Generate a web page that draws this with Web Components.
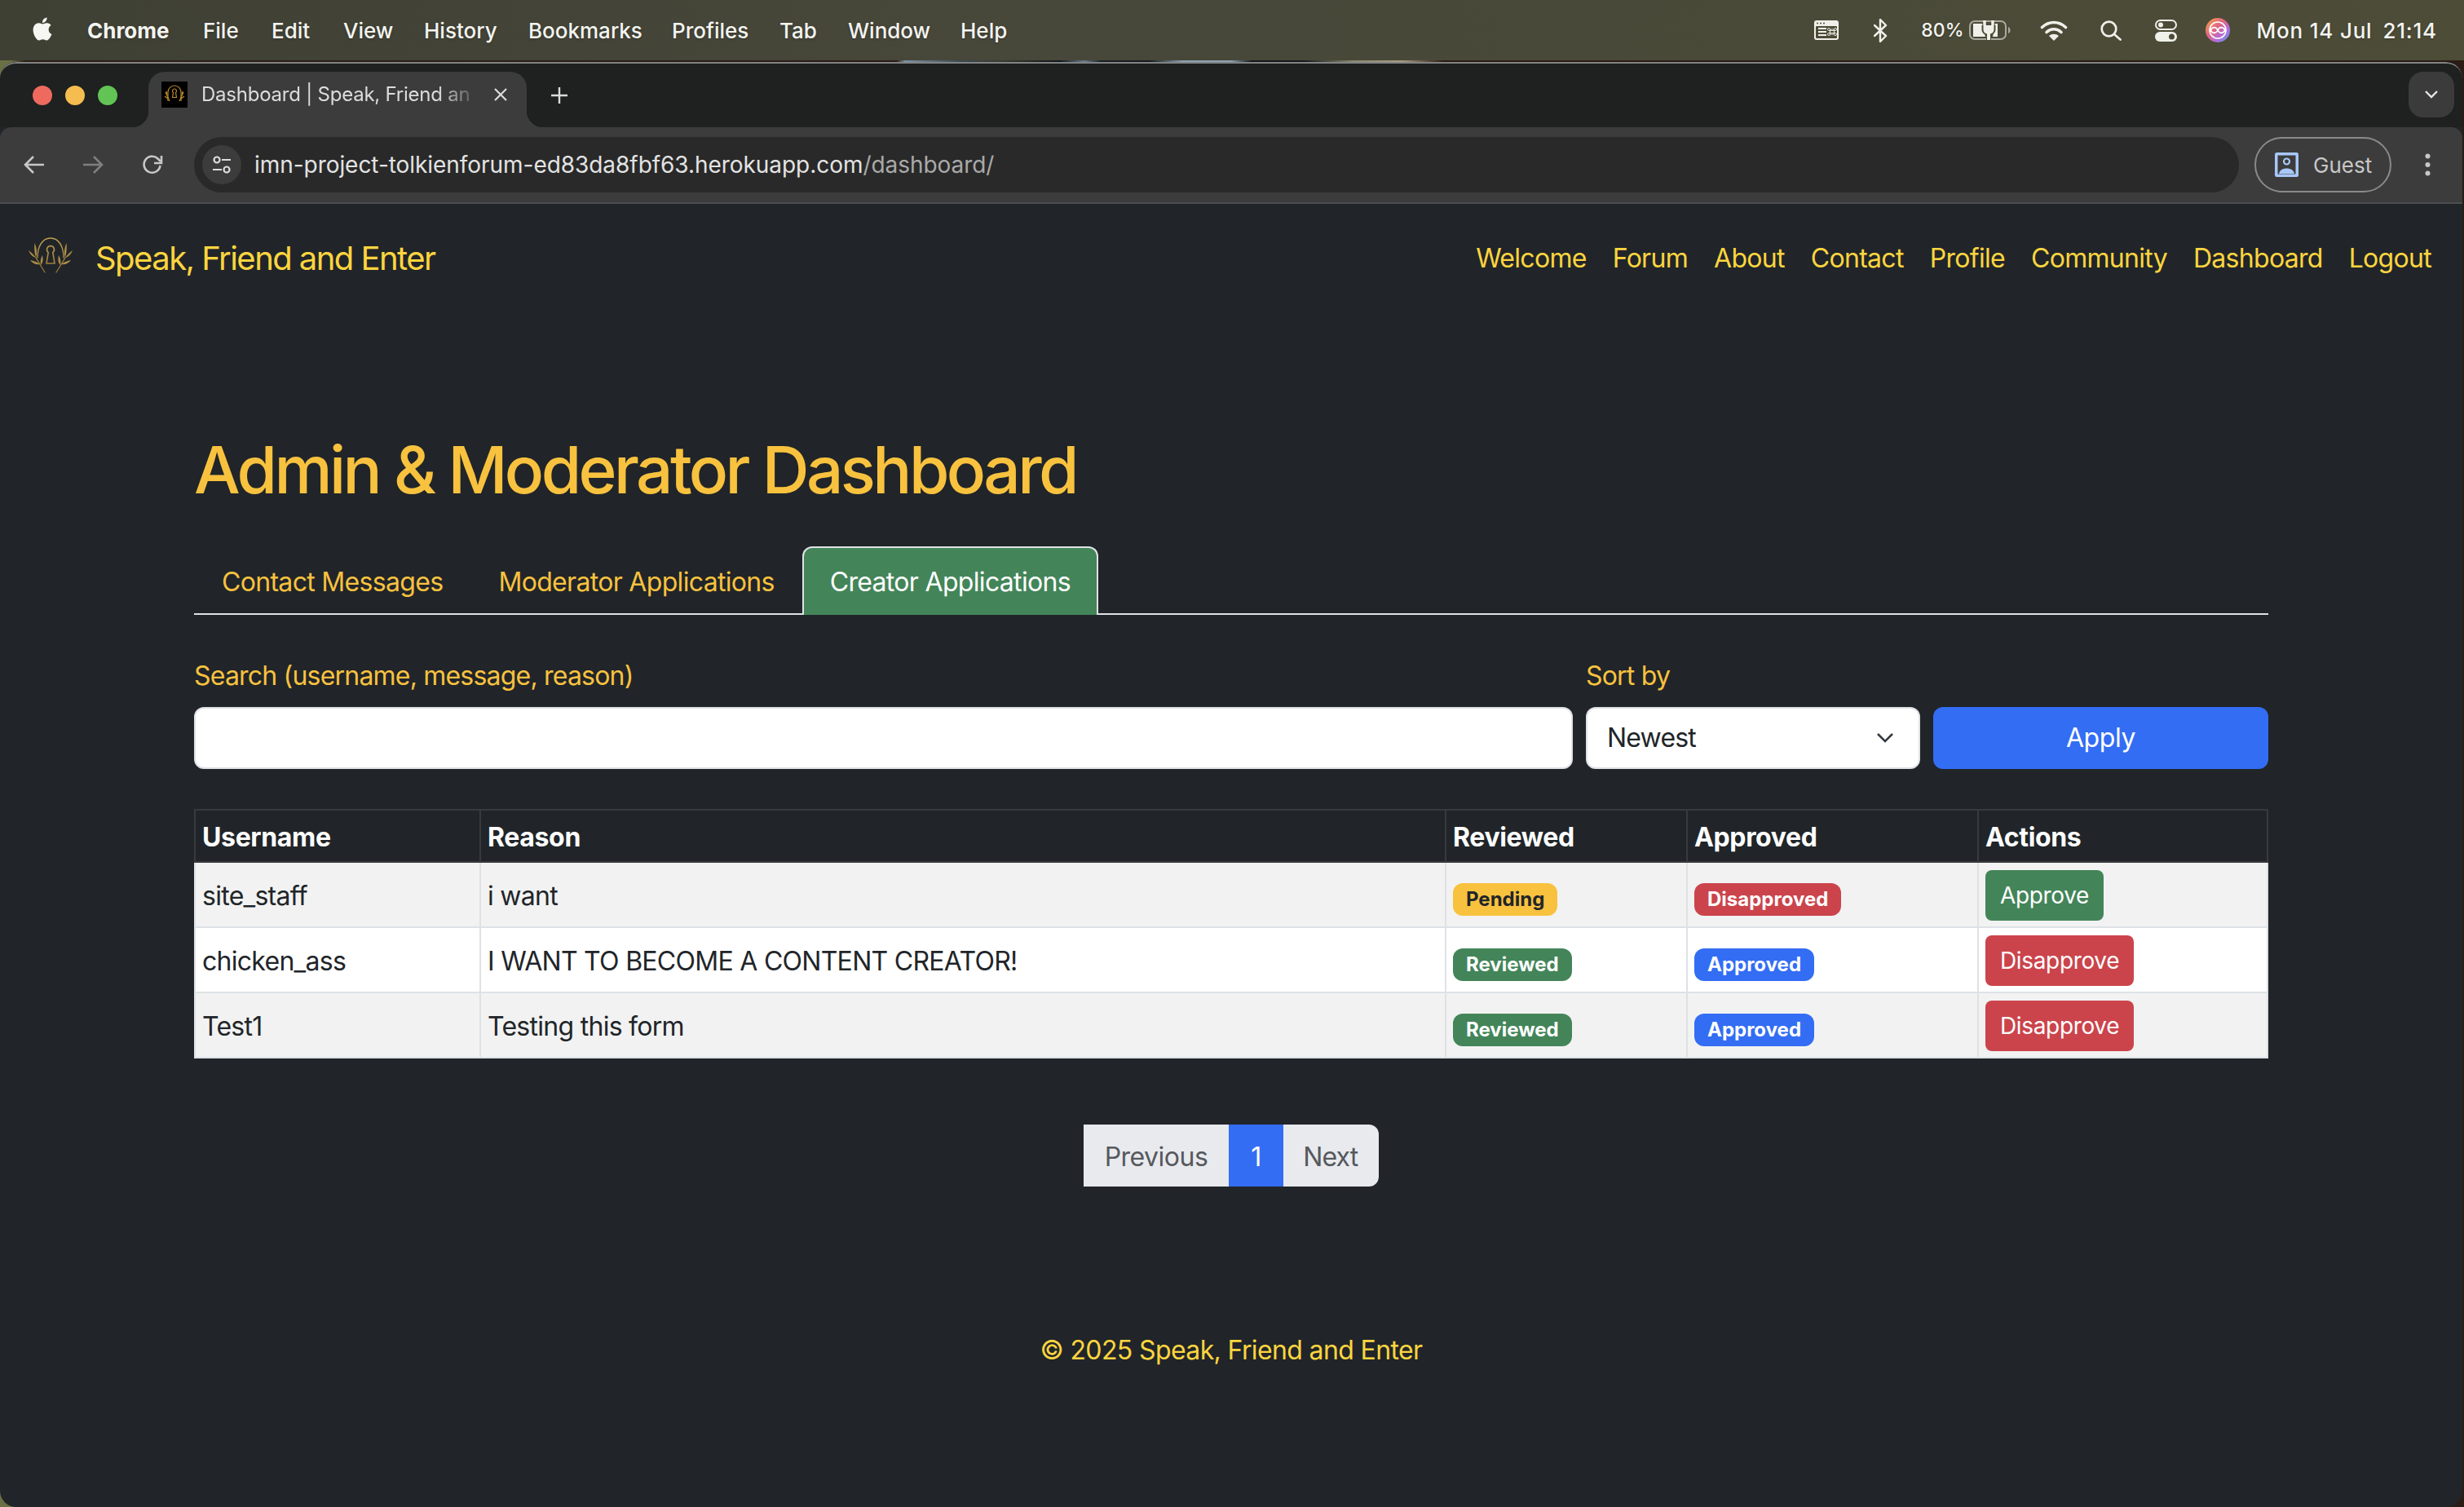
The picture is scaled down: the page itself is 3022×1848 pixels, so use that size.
<!DOCTYPE html>
<html lang="en">
<head>
<meta charset="utf-8">
<title>Dashboard | Speak, Friend and Enter</title>
<style>
  html, body { margin: 0; padding: 0; background: #16170f; }
  body {
    width: 3022px;
    height: 1848px;
    overflow: hidden;
    font-family: Inter, "Liberation Sans", sans-serif;
    /* bit of wallpaper showing between the menu bar and the window */
    background: linear-gradient(90deg, #6a6f45 0, #6a6f45 14px, #2a1f18 30px, #2a1c14 1100px, #7c93a5 1110px, #3a4650 1180px, #3a3a2c 1230px, #11161b 1300px, #6a7d90 1330px, #1a1f22 1350px, #141a1c 1410px, #8ba0b0 1450px, #8ba0b0 1510px, #14181a 1535px, #141a1c 1600px, #8b8a70 1660px, #a89c80 1720px, #2a1c14 1770px, #2a1c14 3022px);
  }
</style>
</head>
<body>
<mac-menubar></mac-menubar>
<browser-window>
  <tab-strip slot="chrome"></tab-strip>
  <browser-toolbar slot="chrome"></browser-toolbar>
  <site-nav></site-nav>
  <dash-page></dash-page>
  <site-footer></site-footer>
</browser-window>

<script>
const GOLD = '#f8c23f';
const GOLD_BRIGHT = '#fdd53f';

class MacMenubar extends HTMLElement {
  connectedCallback() {
    this.attachShadow({ mode: 'open' });
    const items = [['File', 249], ['Edit', 333], ['View', 421], ['History', 520], ['Bookmarks', 648], ['Profiles', 824], ['Tab', 956], ['Window', 1040], ['Help', 1178]];
    this.shadowRoot.innerHTML = `
      <style>
        :host {
          display: flex;
          height: 74px;
          align-items: center;
          background: linear-gradient(90deg, #3f4034 0%, #47473a 40%, #4c4c37 100%);
          color: #f4f4f0;
          font: 500 26px Inter, "Liberation Sans", sans-serif;
          padding: 0 33px 0 38px;
          text-shadow: 0 1px 3px rgba(0,0,0,.25);
        }
        .left { display: flex; align-items: center; }
        .apple { width: 28px; height: 33px; fill: #f6f6f2; margin-right: 41px; margin-top: -4px; }
        b { font-weight: 700; width: 142px; flex: none; }
        .left span { flex: none; }
        .right { margin-left: auto; display: flex; align-items: center; }
        .right svg { flex: none; display: block; }
        .pct { font-size: 23px; margin-left: 41px; margin-right: 6px; }
        .date { margin-left: 33px; letter-spacing: .8px; }
        .date i { font-style: normal; margin-left: 13px; }
      </style>
      <div class="left">
        <svg class="apple" viewBox="0 0 24 24"><path d="M12.152 6.896c-.948 0-2.415-1.078-3.96-1.04-2.04.027-3.91 1.183-4.961 3.014-2.117 3.675-.546 9.103 1.519 12.09 1.013 1.454 2.208 3.09 3.792 3.039 1.52-.065 2.09-.987 3.935-.987 1.831 0 2.35.987 3.96.948 1.637-.026 2.676-1.48 3.676-2.948 1.156-1.688 1.636-3.325 1.662-3.415-.039-.013-3.182-1.221-3.22-4.857-.026-3.04 2.48-4.494 2.597-4.559-1.429-2.09-3.623-2.324-4.39-2.376-2-.156-3.675 1.09-4.61 1.09zM15.53 3.83c.843-1.012 1.4-2.427 1.245-3.83-1.207.052-2.662.805-3.532 1.818-.78.896-1.454 2.338-1.273 3.714 1.338.104 2.715-.688 3.559-1.701"/></svg>
        <b>Chrome</b>
        ${items.map((it, i) => `<span style="width:${(i < items.length - 1 ? items[i + 1][1] : it[1] + 60) - it[1]}px">${it[0]}</span>`).join('')}
      </div>
      <div class="right">
        <svg width="30" height="24" viewBox="0 0 30 24"><rect width="30" height="24" rx="3" fill="#f0f0ea"/><rect x="2" y="7" width="26" height="15" rx="1" fill="#4c4c37"/><g fill="#4c4c37"><circle cx="4" cy="3.500" r="1"/><circle cx="8" cy="3.500" r="1"/><circle cx="12" cy="3.500" r="1"/></g><path d="M5 10h10M5 14h10M5 18h10" stroke="#f0f0ea" stroke-width="1.800"/><path d="M19.500 11h5v6h-5zM19.500 11a1.500 1.500 0 1 0-1.500 1.500h8a1.500 1.500 0 1 0-1.500-1.500v6a1.500 1.500 0 1 0 1.500-1.500h-8a1.500 1.500 0 1 0 1.500 1.500z" fill="none" stroke="#f0f0ea" stroke-width=".9"/></svg>
        <svg style="margin-left:43px" width="17" height="29" viewBox="0 0 17 29"><path d="M1 8l14 13-7 7V1l7 7L1 21" fill="none" stroke="#f0f0ea" stroke-width="2.400" stroke-linejoin="round" stroke-linecap="round"/></svg>
        <span class="pct">80%</span>
        <svg width="51" height="24" viewBox="0 0 51 24"><rect x="1" y="1" width="44" height="22" rx="6" fill="none" stroke="#a9a99e" stroke-width="2"/><path d="M48 8c2 1 2.500 2 2.500 4s-.5 3-2.500 4z" fill="#a9a99e"/><path d="M5 4h11l4 16H5z" fill="#f0f0ea"/><path d="M29 20l3-16h3v16z" fill="#f0f0ea"/><path d="M15.500 6h17v5c0 4-3 6.500-5.500 7v6h-6v-6c-2.500-.5-5.500-3-5.500-7z" fill="#4c4c37"/><path d="M19 6V0M29 6V0" stroke="#f0f0ea" stroke-width="3.500"/><path d="M17.500 6h13v5c0 3.500-2.500 5-4.500 5.500V24h-4v-7.500c-2-.5-4.500-2-4.500-5.500z" fill="#f0f0ea"/></svg>
        <svg style="margin-left:36px" width="34" height="25" viewBox="0 0 34 25" fill="none" stroke="#f0f0ea" stroke-linecap="round"><path d="M2.500 8.500C11 .5 23 .5 31.500 8.500" stroke-width="3.600"/><path d="M8 14.500c5.500-5 12.500-5 18 0" stroke-width="3.600"/><path d="M17 25l-6-6c3.500-3 8.500-3 12 0z" fill="#f0f0ea" stroke="none"/></svg>
        <svg style="margin-left:40px" width="26" height="25" viewBox="0 0 26 25" fill="none" stroke="#f0f0ea" stroke-width="2.700" stroke-linecap="round"><circle cx="10.500" cy="10.500" r="8.800"/><path d="M17 17l7.500 6.500"/></svg>
        <svg style="margin-left:41px" width="27" height="27" viewBox="0 0 27 27"><rect x="1" y="1" width="25" height="11" rx="5.500" fill="none" stroke="#f0f0ea" stroke-width="2"/><circle cx="7" cy="6.500" r="3" fill="#f0f0ea"/><rect y="15" width="27" height="12" rx="6" fill="#f0f0ea"/><circle cx="20.500" cy="21" r="3.500" fill="#4c4c37"/></svg>
        <svg style="margin-left:35px" width="30" height="30" viewBox="0 0 30 30"><defs><linearGradient id="si" x1="0" y1="0" x2="1" y2="1"><stop offset="0" stop-color="#f3a83f"/><stop offset=".4" stop-color="#e4677f"/><stop offset=".7" stop-color="#b06ddc"/><stop offset="1" stop-color="#4fa8ec"/></linearGradient></defs><circle cx="15" cy="15" r="15" fill="url(#si)"/><circle cx="15" cy="15" r="10" fill="none" stroke="#fff" stroke-width="1.600"/><path d="M6 15c3-5 7-4 9 0s6 5 9 0c-3-5-7-4-9 0s-6 5-9 0z" fill="none" stroke="#fff" stroke-width="1.600"/></svg>
        <span class="date">Mon 14 Jul<i>21:14</i></span>
      </div>
    `;
  }
}
customElements.define('mac-menubar', MacMenubar);

class BrowserWindow extends HTMLElement {
  connectedCallback() {
    this.attachShadow({ mode: 'open' });
    this.shadowRoot.innerHTML = `
      <style>
        :host {
          display: block;
          height: 1772px;
          margin-top: 2px;
          margin-right: 2px;
          border-radius: 20px 20px 20px 20px;
          background: #212529;
          overflow: hidden;
        }
        .chrome { display: block; }
      </style>
      <div class="chrome"><slot name="chrome"></slot></div>
      <slot></slot>
    `;
  }
}
customElements.define('browser-window', BrowserWindow);

class TabStrip extends HTMLElement {
  connectedCallback() {
    this.attachShadow({ mode: 'open' });
    this.shadowRoot.innerHTML = `
      <style>
        :host {
          display: flex;
          height: 80px;
          box-sizing: border-box;
          padding-top: 10px;
          background: #1f2020;
          border-top: 2px solid #828384;
          border-radius: 20px 20px 0 0;
          font: 400 24px Inter, "Liberation Sans", sans-serif;
          letter-spacing: -.23px;
          color: #dcdcdc;
        }
        .lights { display: flex; gap: 16px; padding: 17px 0 0 40px; width: 182px; box-sizing: border-box; flex: none; }
        .lights i { width: 24px; height: 24px; border-radius: 50%; }
        .tab {
          position: relative;
          width: 464px;
          height: 68px;
          box-sizing: border-box;
          background: #3c3c3c;
          border-radius: 20px 20px 0 0;
          display: flex;
          align-items: flex-start;
          padding: 12px 23px 0 16px;
          flex: none;
        }
        .tab::before, .tab::after {
          content: '';
          position: absolute;
          bottom: 0;
          width: 20px;
          height: 20px;
        }
        .tab::before { left: -20px; background: radial-gradient(circle at 0 0, transparent 20px, #3c3c3c 20.5px); }
        .tab::after { right: -20px; background: radial-gradient(circle at 100% 0, transparent 20px, #3c3c3c 20.5px); }
        .fav { width: 32px; height: 32px; background: #000; flex: none; margin-right: 17px; }
        .title {
          white-space: nowrap;
          line-height: 32px;
          -webkit-mask-image: linear-gradient(90deg, #000 88%, rgba(0,0,0,.25) 100%);
          mask-image: linear-gradient(90deg, #000 88%, rgba(0,0,0,.25) 100%);
        }
        .x { margin-left: auto; margin-top: 7px; display: block; }
        .plus { margin: 19px 0 0 30px; display: block; }
        .more {
          margin-left: auto;
          margin-right: 10px;
          width: 56px;
          height: 56px;
          border-radius: 18px;
          background: #3b3b3b;
          display: flex;
          align-items: center;
          justify-content: center;
        }
      </style>
      <div class="lights"><i style="background:#ee6a5f"></i><i style="background:#f5bd4f"></i><i style="background:#61c454"></i></div>
      <div class="tab">
        <svg class="fav" viewBox="0 0 32 32" fill="none" stroke="#b98a2c" stroke-width="1.200"><path d="M8 24V13a8 8 0 0 1 16 0v11"/><path d="M16 9a2.500 2.500 0 0 1 1.500 4.500l1 6h-5l1-6A2.500 2.500 0 0 1 16 9z"/><path d="M5 13l5 11M27 13l-5 11M4 18l4 3M28 18l-4 3M6 12l1 5M26 12l-1 5"/></svg>
        <span class="title">Dashboard | Speak, Friend an</span>
        <svg class="x" width="18" height="18" viewBox="0 0 18 18"><path d="M2 2l14 14M16 2L2 16" stroke="#dcdcdc" stroke-width="2.200"/></svg>
      </div>
      <svg class="plus" width="20" height="20" viewBox="0 0 20 20"><path d="M10 0v20M0 10h20" stroke="#dcdcdc" stroke-width="2.400"/></svg>
      <div class="more"><svg width="16" height="10" viewBox="0 0 16 10"><path d="M1 1l7 7 7-7" fill="none" stroke="#e6e6e6" stroke-width="2.400"/></svg></div>
    `;
  }
}
customElements.define('tab-strip', TabStrip);

class BrowserToolbar extends HTMLElement {
  connectedCallback() {
    this.attachShadow({ mode: 'open' });
    this.shadowRoot.innerHTML = `
      <style>
        :host {
          display: flex;
          align-items: center;
          height: 94px;
          box-sizing: border-box;
          background: #3c3c3c;
          border-bottom: 2px solid #4a4d4f;
          border-radius: 14px 14px 0 0;
          font: 400 28px Inter, "Liberation Sans", sans-serif;
          color: #e3e3e3;
        }
        svg { display: block; flex: none; }
        .nav { display: flex; align-items: center; padding-left: 29px; width: 238px; box-sizing: border-box; flex: none; }
        .omni {
          flex: none;
          width: 2508px;
          height: 68px;
          border-radius: 34px;
          background: #292929;
          display: flex;
          align-items: center;
          padding-left: 10px;
          box-sizing: border-box;
          letter-spacing: -.05px;
        }
        .tune { width: 48px; height: 48px; border-radius: 50%; background: #3c3c3c; display: flex; align-items: center; justify-content: center; margin-right: 16px; }
        .path { color: #a9a9a9; }
        .guest {
          margin-left: 19px;
          width: 168px;
          height: 68px;
          box-sizing: border-box;
          border: 2px solid #8a8a8a;
          border-radius: 34px;
          display: flex;
          align-items: center;
          padding-left: 23px;
          gap: 18px;
          flex: none;
          color: #c7c7c7;
          font-size: 26px;
        }
        .kebab { margin-left: 41px; }
      </style>
      <div class="nav">
        <svg width="25" height="24" viewBox="0 0 25 24"><path d="M12 2L2 12l10 10M2 12h23" fill="none" stroke="#c7c7c7" stroke-width="2.600"/></svg>
        <svg style="margin-left:48px" width="25" height="24" viewBox="0 0 25 24"><path d="M13 2l10 10-10 10M23 12H0" fill="none" stroke="#7f7f7f" stroke-width="2.600"/></svg>
        <svg style="margin-left:47px" width="26" height="26" viewBox="0 0 26 26"><path d="M22.500 14a10 10 0 1 1-3-8.500l3.500 3.500" fill="none" stroke="#c7c7c7" stroke-width="2.600"/><path d="M24 2v9h-9" fill="none" stroke="#c7c7c7" stroke-width="2.600"/></svg>
      </div>
      <div class="omni">
        <span class="tune"><svg width="24" height="24" viewBox="0 0 24 24" fill="none" stroke="#dcdcdc" stroke-width="2.200"><circle cx="6" cy="6" r="3.500"/><path d="M12 6h11M1 18h11"/><circle cx="18" cy="18" r="3.500"/></svg></span>
        <span>imn-project-tolkienforum-ed83da8fbf63.herokuapp.com<span class="path">/dashboard/</span></span>
      </div>
      <div class="guest">
        <svg width="29" height="30" viewBox="0 0 29 30"><rect width="29" height="30" rx="2.500" fill="#a8c7fa"/><rect x="3.500" y="3.500" width="22" height="23" fill="#3c3c3c"/><circle cx="14.500" cy="11" r="3.500" fill="none" stroke="#a8c7fa" stroke-width="2.200"/><path d="M5 26c1-4.500 5-6.500 9.500-6.500S23 21.500 24 26z" fill="#a8c7fa"/></svg>
        <span>Guest</span>
      </div>
      <svg class="kebab" width="7" height="28" viewBox="0 0 7 28" fill="#c7c7c7"><circle cx="3.500" cy="3.500" r="3"/><circle cx="3.500" cy="14" r="3"/><circle cx="3.500" cy="24.500" r="3"/></svg>
    `;
  }
}
customElements.define('browser-toolbar', BrowserToolbar);

class SiteNav extends HTMLElement {
  connectedCallback() {
    this.attachShadow({ mode: 'open' });
    const links = ['Welcome', 'Forum', 'About', 'Contact', 'Profile', 'Community', 'Dashboard', 'Logout'];
    this.shadowRoot.innerHTML = `
      <style>
        :host {
          display: flex;
          align-items: center;
          justify-content: space-between;
          height: 134px;
          padding: 0 22px 0 34px;
          font: 400 32px/48px Inter, "Liberation Sans", sans-serif;
          letter-spacing: -.7px;
          color: ${GOLD_BRIGHT};
        }
        .brand { display: flex; align-items: center; font-size: 40px; letter-spacing: -1.55px; }
        .brand svg { display: block; margin: -8px 27px 0 0; }
        a { color: inherit; text-decoration: none; padding: 0 16px; }
        ul { display: flex; list-style: none; margin: 0; padding: 0; }
      </style>
      <div class="brand">
        <svg width="56" height="44" viewBox="0 0 56 44" fill="none" stroke="url(#lg)" stroke-linecap="round">
          <defs><linearGradient id="lg" gradientUnits="userSpaceOnUse" x1="0" y1="0" x2="0" y2="44"><stop offset="0" stop-color="#c6a052"/><stop offset="1" stop-color="#8f7233"/></linearGradient></defs>
          <path d="M12 25C12 11 18 1 28 1s16 10 16 24" stroke-width="1.400"/>
          <path d="M28 10.500a4.500 4.500 0 0 1 2.800 8L33 32H23l2.200-13.500a4.500 4.500 0 0 1 2.800-8z" stroke-width="1.600"/>
          <path d="M21 43L10 25M35 43l11-18" stroke-width="1.300"/>
          <path d="M10 25C8 17 8 13 8.500 7c2.500 6 3.500 12 1.500 18zM46 25c2-8 2-12 1.500-18-2.500 6-3.500 12-1.500 18z" fill="#ad8d45" stroke="none"/>
          <path d="M10 25C7 21 4 18 1 16c2 5 5 8 9 9zM46 25c3-4 6-7 9-9-2 5-5 8-9 9z" fill="#ad8d45" stroke="none"/>
          <path d="M16 34c-1-5 0-8 2-12 1 5 1 9-2 12zM40 34c1-5 0-8-2-12-1 5-1 9 2 12z" fill="#ad8d45" stroke="none"/>
          <path d="M15 33C11 30 7 29 3 28c3 4 7 6 12 5zM41 33c4-3 8-4 12-5-3 4-7 6-12 5z" fill="#ad8d45" stroke="none"/>
        </svg>
        <span>Speak, Friend and Enter</span>
      </div>
      <ul>${links.map(l => `<li><a href="#">${l}</a></li>`).join('')}</ul>
    `;
  }
}
customElements.define('site-nav', SiteNav);

class DashTabs extends HTMLElement {
  connectedCallback() {
    this.attachShadow({ mode: 'open' });
    this.shadowRoot.innerHTML = `
      <style>
        :host {
          display: flex;
          border-bottom: 2px solid #dee2e6;
          font: 400 32px/48px Inter, "Liberation Sans", sans-serif;
          letter-spacing: -.68px;
          color: ${GOLD};
        }
        a {
          color: inherit;
          text-decoration: none;
          padding: 18px 32px 16px;
          border: 2px solid transparent;
          border-bottom: 0;
          margin-bottom: -2px;
          border-radius: 12px 12px 0 0;
        }
        a.active { background: #438559; color: #fff; border-color: #dee2e6; }
      </style>
      <a href="#">Contact Messages</a>
      <a href="#">Moderator Applications</a>
      <a href="#" class="active">Creator Applications</a>
    `;
  }
}
customElements.define('dash-tabs', DashTabs);

class FilterForm extends HTMLElement {
  connectedCallback() {
    this.attachShadow({ mode: 'open' });
    this.shadowRoot.innerHTML = `
      <style>
        :host {
          display: grid;
          grid-template-columns: 1fr 410px 411px;
          column-gap: 16px;
          font: 400 32px/48px Inter, "Liberation Sans", sans-serif;
          letter-spacing: -.8px;
          color: ${GOLD};
        }
        label { display: block; padding-top: 2px; margin-bottom: 14px; }
        .field {
          box-sizing: border-box;
          height: 76px;
          width: 100%;
          background: #fff;
          border: 2px solid #dee2e6;
          border-radius: 12px;
          color: #212529;
          padding: 12px 24px;
          display: flex;
          align-items: center;
          justify-content: space-between;
        }
        .field svg { margin-right: 7px; }
        .apply {
          align-self: end;
          height: 76px;
          background: #336df4;
          border: 0;
          border-radius: 12px;
          color: #fff;
          font: inherit;
          letter-spacing: -.4px;
          padding: 0;
        }
      </style>
      <div><label>Search (username, message, reason)</label><div class="field"></div></div>
      <div>
        <label>Sort by</label>
        <div class="field"><span>Newest</span>
          <svg width="20" height="12" viewBox="0 0 20 12"><path d="M1 1l9 9 9-9" fill="none" stroke="#343a40" stroke-width="2.600"/></svg>
        </div>
      </div>
      <button class="apply">Apply</button>
    `;
  }
}
customElements.define('filter-form', FilterForm);

class StatusBadge extends HTMLElement {
  connectedCallback() {
    this.attachShadow({ mode: 'open' });
    const colours = { warning: ['#f8c23f', '#212529'], danger: ['#cb444c', '#fff'], success: ['#438559', '#fff'], primary: ['#336df4', '#fff'] };
    const [bg, fg] = colours[this.getAttribute('kind')];
    this.shadowRoot.innerHTML = `
      <style>
        :host {
          display: inline-block;
          background: ${bg};
          color: ${fg};
          font: 700 24px/24px Inter, "Liberation Sans", sans-serif;
          padding: 8px 16px;
          border-radius: 12px;
          vertical-align: middle;
        }
      </style>
      <slot></slot>
    `;
  }
}
customElements.define('status-badge', StatusBadge);

class ActionButton extends HTMLElement {
  connectedCallback() {
    this.attachShadow({ mode: 'open' });
    const bg = this.getAttribute('kind') === 'danger' ? '#cb444c' : '#438559';
    this.shadowRoot.innerHTML = `
      <style>
        :host {
          display: inline-block;
          background: ${bg};
          color: #fff;
          font: 400 28px/42px Inter, "Liberation Sans", sans-serif;
          letter-spacing: -.35px;
          padding: 10px 18px;
          border-radius: 8px;
          vertical-align: top;
        }
      </style>
      <slot></slot>
    `;
  }
}
customElements.define('action-button', ActionButton);

class AppTable extends HTMLElement {
  connectedCallback() {
    this.attachShadow({ mode: 'open' });
    this.shadowRoot.innerHTML = `
      <style>
        :host { display: block; }
        table {
          border-collapse: separate;
          border-spacing: 0;
          table-layout: fixed;
          width: 2544px;
          font: 400 32px/48px Inter, "Liberation Sans", sans-serif;
          letter-spacing: -.72px;
          color: #212529;
        }
        th, td { box-sizing: border-box; padding: 0 8px; border-left: 2px solid #dee2e6; border-bottom: 2px solid #dee2e6; text-align: left; }
        td:last-child { border-right: 2px solid #dee2e6; }
        thead th, thead th:last-child {
          height: 66px;
          background: #212529;
          color: #fff;
          font-weight: 700;
          letter-spacing: -.35px;
          border: 2px solid #373b3e;
          border-width: 2px 0 2px 2px;
          padding-top: 4px;
        }
        thead th:last-child { border-right-width: 2px; }
        td { height: 80px; padding-top: 4px; }
        tr:nth-child(odd) td { background: #f2f2f2; }
        tr:nth-child(even) td { background: #fff; }
        td.bdg { padding-top: 8px; letter-spacing: 0; }
        td.act { padding-top: 9px; vertical-align: top; }
      </style>
      <table>
        <colgroup><col style="width:350px"><col style="width:1184px"><col style="width:296px"><col style="width:357px"><col style="width:357px"></colgroup>
        <thead><tr><th>Username</th><th>Reason</th><th>Reviewed</th><th>Approved</th><th>Actions</th></tr></thead>
        <tbody>
          <tr><td>site_staff</td><td>i want</td><td class="bdg"><status-badge kind="warning">Pending</status-badge></td><td class="bdg"><status-badge kind="danger">Disapproved</status-badge></td><td class="act"><action-button kind="success">Approve</action-button></td></tr>
          <tr><td>chicken_ass</td><td>I WANT TO BECOME A CONTENT CREATOR!</td><td class="bdg"><status-badge kind="success">Reviewed</status-badge></td><td class="bdg"><status-badge kind="primary">Approved</status-badge></td><td class="act"><action-button kind="danger">Disapprove</action-button></td></tr>
          <tr><td>Test1</td><td>Testing this form</td><td class="bdg"><status-badge kind="success">Reviewed</status-badge></td><td class="bdg"><status-badge kind="primary">Approved</status-badge></td><td class="act"><action-button kind="danger">Disapprove</action-button></td></tr>
        </tbody>
      </table>
    `;
  }
}
customElements.define('app-table', AppTable);

class PageNav extends HTMLElement {
  connectedCallback() {
    this.attachShadow({ mode: 'open' });
    this.shadowRoot.innerHTML = `
      <style>
        :host {
          display: flex;
          justify-content: center;
          font: 400 32px/48px Inter, "Liberation Sans", sans-serif;
          letter-spacing: -.5px;
        }
        span { display: block; background: #e9eaee; color: #56595d; padding: 16px 26px 12px; }
        span:first-child { border-radius: 12px 0 0 12px; padding-right: 24px; }
        span:last-child { border-radius: 0 12px 12px 0; padding-left: 24px; letter-spacing: -.9px; }
        span.on { background: #336df4; color: #fff; padding: 16px 27px 12px; letter-spacing: 0; }
      </style>
      <span>Previous</span><span class="on">1</span><span>Next</span>
    `;
  }
}
customElements.define('page-nav', PageNav);

class DashPage extends HTMLElement {
  connectedCallback() {
    this.attachShadow({ mode: 'open' });
    this.shadowRoot.innerHTML = `
      <style>
        :host { display: block; padding: 144px 238px 0; font-family: Inter, "Liberation Sans", sans-serif; }
        h1 { margin: 0 0 46px; font-size: 80px; line-height: 96px; font-weight: 500; letter-spacing: -3.55px; color: ${GOLD}; }
        filter-form { margin-top: 49px; }
        app-table { margin-top: 49px; }
        page-nav { margin-top: 81px; }
      </style>
      <h1>Admin &amp; Moderator Dashboard</h1>
      <dash-tabs></dash-tabs>
      <filter-form></filter-form>
      <app-table></app-table>
      <page-nav></page-nav>
    `;
  }
}
customElements.define('dash-page', DashPage);

class SiteFooter extends HTMLElement {
  connectedCallback() {
    this.attachShadow({ mode: 'open' });
    this.shadowRoot.innerHTML = `
      <style>
        :host {
          display: block;
          margin-top: 177px;
          text-align: center;
          font: 400 32px/48px Inter, "Liberation Sans", sans-serif;
          letter-spacing: -.62px;
          color: ${GOLD_BRIGHT};
        }
      </style>
      &copy; 2025 Speak, Friend and Enter
    `;
  }
}
customElements.define('site-footer', SiteFooter);
</script>
</body>
</html>
